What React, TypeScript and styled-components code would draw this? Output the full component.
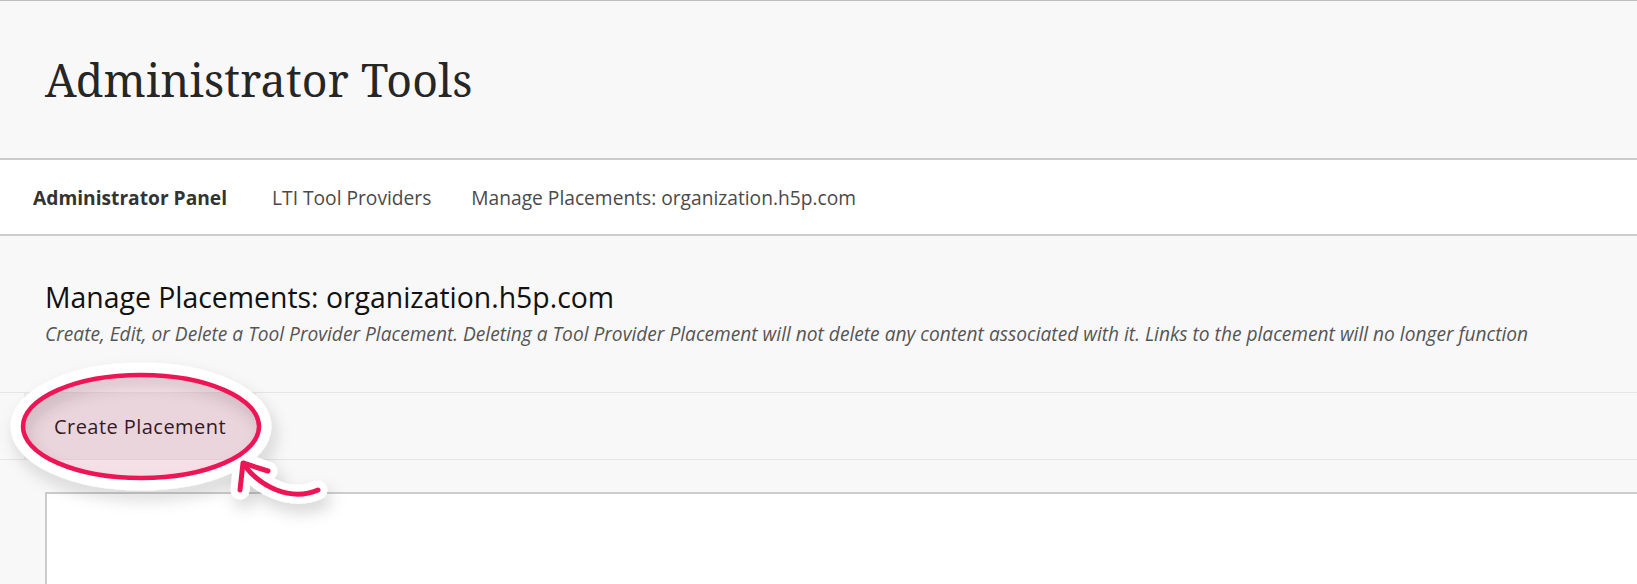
import React from "react";
import styled, { createGlobalStyle } from "styled-components";

const GlobalStyle = createGlobalStyle`
  html, body {
    margin: 0;
    padding: 0;
    background: #f8f8f8;
    overflow: hidden;
  }
  body {
    font-family: "Open Sans", "Noto Sans", sans-serif;
  }
`;

const Page = styled.div`
  position: relative;
  width: 1637px;
  height: 584px;
  overflow: hidden;
  background: #f8f8f8;
`;

const Header = styled.header`
  height: 157px;
  display: flex;
  align-items: center;
  padding-left: 45px;
  background: #f8f8f8;
  border-top: 1px solid #bdbdbd;
  border-bottom: 2px solid #cccccc;
`;

const Title = styled.h1`
  margin: 0;
  font-family: "Noto Serif", "DejaVu Serif", serif;
  font-weight: 400;
  font-size: 44.7px;
  color: #262626;
  letter-spacing: 0.2px;
`;

const Nav = styled.nav`
  height: 74px;
  display: flex;
  align-items: center;
  gap: 40px;
  padding-left: 33px;
  background: #ffffff;
  border-bottom: 2px solid #cccccc;
`;

const NavItem = styled.a<{ active?: boolean }>`
  font-size: 19.2px;
  font-weight: ${(p) => (p.active ? 700 : 400)};
  color: ${(p) => (p.active ? "#333333" : "#4a4a4a")};
  padding-right: ${(p) => (p.active ? "5px" : "0")};
  text-decoration: none;
  cursor: pointer;
`;

const Main = styled.main`
  padding-top: 44px;
`;

const Intro = styled.div`
  padding-left: 45px;
`;

const Heading = styled.h2`
  margin: 0;
  font-size: 28.4px;
  line-height: 34px;
  font-weight: 400;
  color: #111111;
`;

const Description = styled.p`
  margin: 8px 0 0;
  font-size: 19.15px;
  line-height: 24px;
  font-style: italic;
  color: #555555;
`;

const Toolbar = styled.div`
  margin-top: 46px;
  height: 66px;
  display: flex;
  align-items: stretch;
  padding-left: 24px;
  border-top: 1px solid #e6e6e6;
  border-bottom: 1px solid #e6e6e6;
`;

const ToolbarButton = styled.button`
  display: flex;
  align-items: center;
  padding: 0 30px;
  border: none;
  background: #ebebeb;
  font-family: "Open Sans", "Noto Sans", sans-serif;
  font-size: 20px;
  letter-spacing: 0.45px;
  color: #1c1c1c;
  cursor: pointer;
`;

const ListBox = styled.div`
  margin: 32px 0 0 45px;
  height: 200px;
  background: #ffffff;
  border-top: 2px solid #cccccc;
  border-left: 2px solid #cccccc;
`;

const Annotation = styled.svg`
  position: absolute;
  left: 0;
  top: 360px;
  width: 360px;
  height: 170px;
  pointer-events: none;
  overflow: visible;
`;

const arrowCurve = "M245 106 C 260 126, 290 142, 318 130";
const arrowHead = "M268 111 L243 103 L240 130";

export default function App() {
  return (
    <Page>
      <GlobalStyle />
      <Header>
        <Title>Administrator Tools</Title>
      </Header>
      <Nav>
        <NavItem active>Administrator Panel</NavItem>
        <NavItem>LTI Tool Providers</NavItem>
        <NavItem>Manage Placements: organization.h5p.com</NavItem>
      </Nav>
      <Main>
        <Intro>
          <Heading>Manage Placements: organization.h5p.com</Heading>
          <Description>
            Create, Edit, or Delete a Tool Provider Placement. Deleting a Tool
            Provider Placement will not delete any content associated with it.
            Links to the placement will no longer function
          </Description>
        </Intro>
        <Toolbar>
          <ToolbarButton>Create Placement</ToolbarButton>
        </Toolbar>
        <ListBox />
      </Main>
      <Annotation viewBox="0 0 360 170">
        <defs>
          <filter id="shadow" x="-20%" y="-20%" width="140%" height="160%">
            <feDropShadow dx="4" dy="9" stdDeviation="8" floodColor="#000" floodOpacity="0.16" />
          </filter>
        </defs>
        <g filter="url(#shadow)" fill="none" stroke="#ffffff" strokeLinecap="round" strokeLinejoin="round">
          <ellipse cx="141" cy="66.5" rx="124" ry="57.5" strokeWidth="13" />
          <path d={arrowCurve} strokeWidth="19" />
          <path d={arrowHead} strokeWidth="19" />
        </g>
        <ellipse cx="141" cy="66.5" rx="118" ry="51.5" fill="rgba(240,17,85,0.1)" stroke="#ee1556" strokeWidth="4.5" />
        <g fill="none" stroke="#ee1556" strokeLinecap="round" strokeLinejoin="round">
          <path d={arrowCurve} strokeWidth="5" />
          <path d={arrowHead} strokeWidth="5" />
        </g>
      </Annotation>
    </Page>
  );
}
